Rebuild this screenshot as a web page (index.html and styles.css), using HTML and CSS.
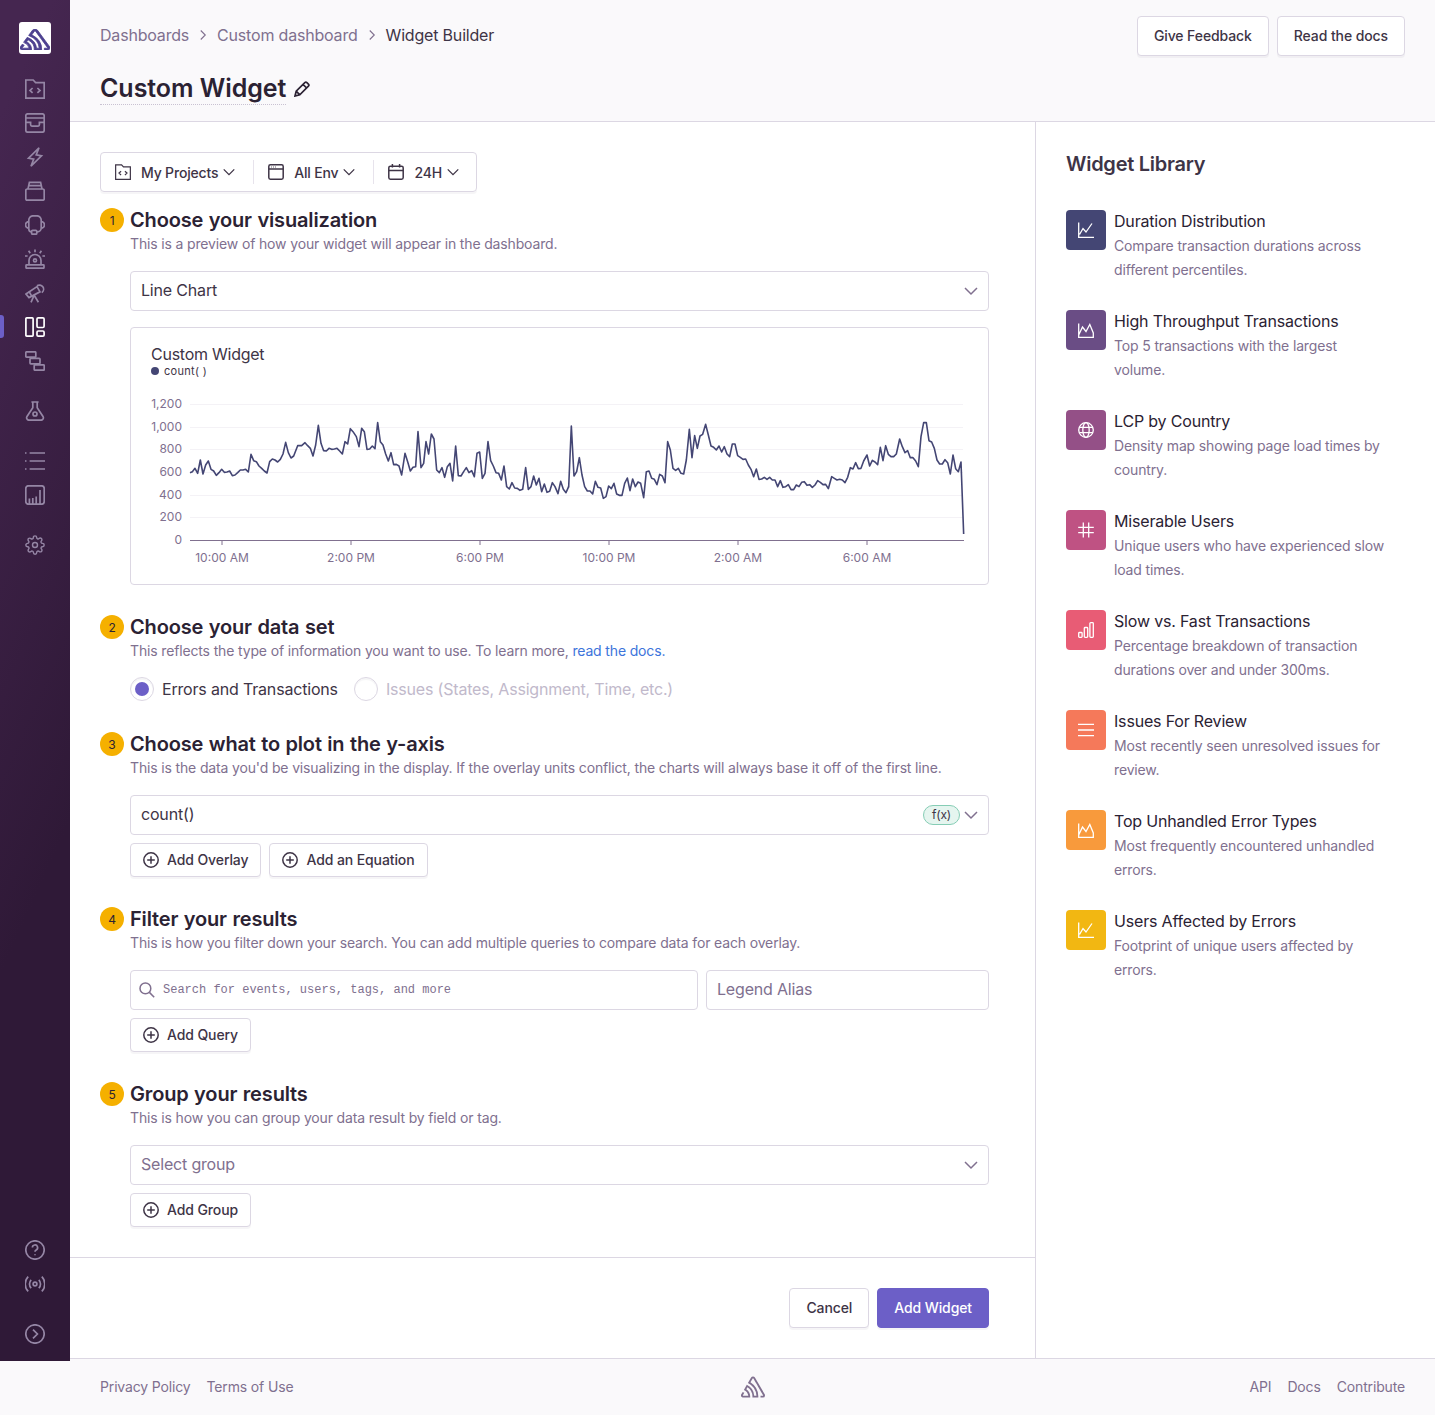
FILE: index.html
```html
<!DOCTYPE html>
<html lang="en">
<head>
<meta charset="UTF-8" />
<meta name="viewport" content="width=device-width, initial-scale=1.0"/>
<title>Widget Builder</title>
<link rel="stylesheet" href="styles.css">
</head>
<body>

<!-- Icon sprite -->
<svg class="sprite" xmlns="http://www.w3.org/2000/svg">
  <symbol id="logo" viewBox="0 0 50 44"><path fill="currentColor" d="M29,2.26a4.67,4.67,0,0,0-8,0L14.42,13.53A32.21,32.21,0,0,1,32.17,40.19H27.55A27.68,27.68,0,0,0,12.09,17.47L6,28a15.92,15.92,0,0,1,9.23,12.17H4.62A.76.76,0,0,1,4,39.06l2.94-5a10.74,10.74,0,0,0-3.36-1.9l-2.91,5a4.54,4.54,0,0,0,1.69,6.24A4.66,4.66,0,0,0,4.62,44H19.15a19.4,19.4,0,0,0-8-17.31l2.31-4A23.87,23.87,0,0,1,23.76,44H36.07a35.88,35.88,0,0,0-16.41-31.8l4.67-8a.77.77,0,0,1,1.05-.27c.53.29,20.29,34.77,20.66,35.17a.76.76,0,0,1-.68,1.13H40.6q.09,1.91,0,3.81h4.78A4.59,4.59,0,0,0,50,39.43a4.49,4.49,0,0,0-.62-2.28Z"/></symbol>
  <symbol id="folder" viewBox="0 0 20 20"><path d="M.8 19.2V1h7.4l2.4 2.6h8.6v15.6zM7.6 9 5 11.4l2.6 2.4M12.4 9l2.6 2.4-2.6 2.4"/></symbol>
  <symbol id="inbox" viewBox="0 0 20 20"><rect x=".8" y=".8" width="18.4" height="18.4" rx="2"/><path d="M.8 5h18.4M.8 9.400h4.800v2.400c0 .8.5 1.300 1.300 1.300h6.200c.8 0 1.300-.5 1.300-1.300V9.400h4.800"/></symbol>
  <symbol id="bolt" viewBox="0 0 20 20"><path d="M14 .8 3.500 11.200l5.200.9-2.700 7.100L16.500 8.800l-5.300-.9z"/></symbol>
  <symbol id="box" viewBox="0 0 20 20"><rect x=".8" y="8" width="18.400" height="11.200" rx="1.400"/><path d="M3 8l1.400-6.600h11.200L17 8M3.800 4.600h12.400"/></symbol>
  <symbol id="headset" viewBox="0 0 20 20"><path d="M3.800 6.600V5a4.200 4.200 0 0 1 4.200-4.200h4A4.200 4.200 0 0 1 16.200 5v8a3.800 3.800 0 0 1-3.800 3.800h-.6M3.800 6.600a3.300 3.300 0 0 0 0 6.600zM16.200 6.600a3.300 3.300 0 0 1 0 6.600M3.800 13.200v.8a2.800 2.800 0 0 0 2.800 2.800"/><rect x="6.600" y="15.400" width="5.200" height="3.800" rx="1"/></symbol>
  <symbol id="siren" viewBox="0 0 20 20"><rect x="1" y="15.800" width="18" height="3.400" rx=".6"/><path d="M4 15.800V11.500a6 6 0 0 1 12 0v4.300M10 .6v2.600M3.600 1.800l1.600 2.400M16.400 1.800l-1.600 2.400M0 7h2.600M20 7h-2.600"/><circle cx="10" cy="11.400" r="1.500"/></symbol>
  <symbol id="telescope" viewBox="0 0 20 20"><path d="M1 11 12 3.600l3 5.200L4 14.600zM12 2.800a3.600 3.600 0 1 1 4.800 6.800M9.200 12.200 6 19.400M9.200 12.200l4.200 7"/><path d="M4 8.400l2.800 5"/></symbol>
  <symbol id="dash" viewBox="0 0 20 20"><rect x=".9" y=".9" width="7.200" height="18.200" rx=".8"/><rect x="12" y=".9" width="7.100" height="9.600" rx="1.200"/><rect x="12" y="14" width="7.100" height="5.100" rx="1.200"/></symbol>
  <symbol id="stack" viewBox="0 0 20 20"><rect x=".8" y=".8" width="10" height="5.400" rx=".8"/><rect x="5" y="7.400" width="10" height="5.400" rx=".8"/><rect x="9.200" y="13.800" width="10" height="5.400" rx=".8"/></symbol>
  <symbol id="flask" viewBox="0 0 20 20"><path d="M6.400 1h7.200M7.800 1v5.800L2 15.400c-1 1.700.1 3.800 2 3.800h12c1.900 0 3-2.100 2-3.800l-5.800-8.600V1"/><circle cx="10" cy="13" r="2"/></symbol>
  <symbol id="list" viewBox="0 0 20 20"><path d="M4.600 2h15.400M4.600 10h15.400M4.600 18h15.400M0 2h1.500M0 10h1.500M0 18h1.500"/></symbol>
  <symbol id="stats" viewBox="0 0 20 20"><rect x=".8" y=".8" width="18.400" height="18.400" rx="2.600"/><path d="M4.400 19v-5.400M7.800 19v-6M11.200 19v-7.600M15 19V5"/></symbol>
  <symbol id="gear" viewBox="0 0 24 24"><circle cx="12" cy="12" r="3"/><path d="M19.400 15a1.650 1.650 0 0 0 .33 1.820l.06.06a2 2 0 0 1 0 2.830 2 2 0 0 1-2.830 0l-.06-.06a1.650 1.650 0 0 0-1.820-.33 1.650 1.650 0 0 0-1 1.510V21a2 2 0 0 1-2 2 2 2 0 0 1-2-2v-.09A1.650 1.650 0 0 0 9 19.400a1.650 1.650 0 0 0-1.820.33l-.06.06a2 2 0 0 1-2.830 0 2 2 0 0 1 0-2.830l.06-.06a1.650 1.650 0 0 0 .33-1.820 1.650 1.650 0 0 0-1.510-1H3a2 2 0 0 1-2-2 2 2 0 0 1 2-2h.09A1.650 1.650 0 0 0 4.600 9a1.650 1.650 0 0 0-.33-1.820l-.06-.06a2 2 0 0 1 0-2.830 2 2 0 0 1 2.830 0l.06.06a1.650 1.650 0 0 0 1.820.33H9a1.650 1.650 0 0 0 1-1.510V3a2 2 0 0 1 2-2 2 2 0 0 1 2 2v.09a1.650 1.650 0 0 0 1 1.510 1.650 1.650 0 0 0 1.820-.33l.06-.06a2 2 0 0 1 2.830 0 2 2 0 0 1 0 2.830l-.06.06a1.650 1.650 0 0 0-.33 1.820V9a1.650 1.650 0 0 0 1.510 1H21a2 2 0 0 1 2 2 2 2 0 0 1-2 2h-.09a1.650 1.650 0 0 0-1.510 1z"/></symbol>
  <symbol id="help" viewBox="0 0 20 20"><circle cx="10" cy="10" r="9.200"/><path d="M7.400 7.600a2.600 2.600 0 1 1 3.800 2.300c-.8.4-1.200.9-1.200 1.800M10 14.200v1"/></symbol>
  <symbol id="broadcast" viewBox="0 0 20 20"><circle cx="10" cy="10" r="1.900"/><path d="M6.200 5.800a6 6 0 0 0 0 8.400M13.800 5.800a6 6 0 0 1 0 8.400M3.200 2.600a10.600 10.600 0 0 0 0 14.800M16.800 2.600a10.600 10.600 0 0 1 0 14.800"/></symbol>
  <symbol id="circle-right" viewBox="0 0 20 20"><circle cx="10" cy="10" r="9.200"/><path d="M8 5.600l4.400 4.400L8 14.400"/></symbol>
  <symbol id="right" viewBox="0 0 16 16"><path d="M5 2l6 6-6 6"/></symbol>
  <symbol id="down" viewBox="0 0 16 16"><path d="M2 5l6 6 6-6"/></symbol>
  <symbol id="pencil" viewBox="0 0 16 16"><path d="M1 15l1.200-4.800L10.800 1.600a1.500 1.500 0 0 1 2.100 0l1.500 1.500a1.500 1.500 0 0 1 0 2.100L5.800 13.800zM2.200 10.200l3.600 3.600M9 3.400l3.600 3.600"/></symbol>
  <symbol id="window" viewBox="0 0 16 16"><rect x=".8" y=".8" width="14.400" height="14.400" rx="1.600"/><path d="M.8 5h14.400M3 3h.5M5 3h.5M7 3h.5"/></symbol>
  <symbol id="calendar" viewBox="0 0 16 16"><rect x=".8" y="2.200" width="14.400" height="13" rx="1.600"/><path d="M.8 6.400h14.400M4.400 0v3.600M11.600 0v3.600"/></symbol>
  <symbol id="plus" viewBox="0 0 16 16"><circle cx="8" cy="8" r="7.200"/><path d="M8 4.200v7.600M4.200 8h7.600"/></symbol>
  <symbol id="search" viewBox="0 0 16 16"><circle cx="6.400" cy="6.400" r="5.400"/><path d="M10.400 10.400 15.200 15.200"/></symbol>
  <symbol id="w-line" viewBox="0 0 16 16"><path d="M.7 .5V15.300H16M1.500 12.500 5 6.500l3 3.500 6-8.500"/></symbol>
  <symbol id="w-area" viewBox="0 0 16 16"><path d="M.7 1.500V15.300H15.300V11L11.800 2.500 8 9.500 4.500 5 .7 13"/></symbol>
  <symbol id="w-globe" viewBox="0 0 16 16"><circle cx="8" cy="8" r="7.300"/><ellipse cx="8" cy="8" rx="3.200" ry="7.300"/><path d="M1.200 5.400h13.600M1.200 10.600h13.600"/></symbol>
  <symbol id="w-hash" viewBox="0 0 16 16"><path d="M5.300 .5v15M10.700 .5v15M.2 5.300h15.600M.2 10.700h15.600"/></symbol>
  <symbol id="w-bars" viewBox="0 0 16 16"><rect x=".7" y="10.500" width="3.400" height="4.800" rx=".8"/><rect x="6.300" y="5.500" width="3.400" height="9.800" rx=".8"/><rect x="11.900" y=".7" width="3.400" height="14.600" rx=".8"/></symbol>
  <symbol id="w-lines" viewBox="0 0 16 16"><path d="M0 2.300h16M0 8h16M0 13.700h16"/></symbol>
</svg>

<div class="app">
  <nav class="sidebar">
    <div class="logo-tile"><svg class="logo-mark" viewBox="0 0 50 44" preserveAspectRatio="none"><use href="#logo" width="50" height="44"/></svg></div>
    <div class="nav-group">
      <a class="nav-item"><svg class="ico"><use href="#folder"/></svg></a>
      <a class="nav-item"><svg class="ico"><use href="#inbox"/></svg></a>
      <a class="nav-item"><svg class="ico"><use href="#bolt"/></svg></a>
      <a class="nav-item"><svg class="ico"><use href="#box"/></svg></a>
      <a class="nav-item"><svg class="ico"><use href="#headset"/></svg></a>
      <a class="nav-item"><svg class="ico"><use href="#siren"/></svg></a>
      <a class="nav-item"><svg class="ico"><use href="#telescope"/></svg></a>
      <a class="nav-item active"><svg class="ico"><use href="#dash"/></svg></a>
      <a class="nav-item"><svg class="ico"><use href="#stack"/></svg></a>
    </div>
    <div class="nav-group">
      <a class="nav-item"><svg class="ico"><use href="#flask"/></svg></a>
    </div>
    <div class="nav-group">
      <a class="nav-item"><svg class="ico"><use href="#list"/></svg></a>
      <a class="nav-item"><svg class="ico"><use href="#stats"/></svg></a>
    </div>
    <div class="nav-group">
      <a class="nav-item"><svg class="ico"><use href="#gear"/></svg></a>
    </div>
    <div class="nav-group nav-bottom">
      <a class="nav-item"><svg class="ico"><use href="#help"/></svg></a>
      <a class="nav-item"><svg class="ico"><use href="#broadcast"/></svg></a>
    </div>
    <div class="nav-group">
      <a class="nav-item"><svg class="ico"><use href="#circle-right"/></svg></a>
    </div>
  </nav>

  <div class="main">
    <header class="page-head">
      <div class="head-top">
        <div class="crumbs">
          <a>Dashboards</a>
          <svg class="crumb-sep"><use href="#right"/></svg>
          <a>Custom dashboard</a>
          <svg class="crumb-sep"><use href="#right"/></svg>
          <span class="crumb-here">Widget Builder</span>
        </div>
        <div class="head-actions">
          <button class="btn btn-lg">Give Feedback</button>
          <button class="btn btn-lg">Read the docs</button>
        </div>
      </div>
      <div class="title-row">
        <h1>Custom Widget</h1>
        <svg class="title-edit"><use href="#pencil"/></svg>
      </div>
    </header>

    <div class="columns">
      <div class="builder">
        <div class="builder-body">
          <div class="filter-bar">
            <div class="filter-item"><svg class="ico-16"><use href="#folder"/></svg><span>My Projects</span><svg class="chev"><use href="#down"/></svg></div>
            <div class="filter-item"><svg class="ico-16"><use href="#window"/></svg><span>All Env</span><svg class="chev"><use href="#down"/></svg></div>
            <div class="filter-item"><svg class="ico-16"><use href="#calendar"/></svg><span>24H</span><svg class="chev"><use href="#down"/></svg></div>
          </div>

          <!-- Step 1 -->
          <section class="step">
            <div class="step-head"><span class="step-num">1</span><h2>Choose your visualization</h2></div>
            <p class="step-desc">This is a preview of how your widget will appear in the dashboard.</p>
            <div class="step-body">
              <div class="field"><span>Line Chart</span><svg class="chev-field"><use href="#down"/></svg></div>
              <div class="chart-card">
                <div class="chart-title">Custom Widget</div>
                <div class="chart-legend"><i></i>count( )</div>
                <svg class="chart" viewBox="131 385 857 196">
                  <g class="grid">
                    <path d="M190 404.500H963M190 427.500H963M190 449.500H963M190 472.500H963M190 495.500H963M190 517.500H963"/>
                  </g>
                  <path class="axis" d="M190 540.500H964M222 540v5M351 540v5M480 540v5M609 540v5M738 540v5M867 540v5"/>
                  <g class="y-labels">
                    <text x="182" y="408">1,200</text>
                    <text x="182" y="431">1,000</text>
                    <text x="182" y="453">800</text>
                    <text x="182" y="476">600</text>
                    <text x="182" y="499">400</text>
                    <text x="182" y="521">200</text>
                    <text x="182" y="544">0</text>
                  </g>
                  <g class="x-labels">
                    <text x="222" y="562">10:00 AM</text>
                    <text x="351" y="562">2:00 PM</text>
                    <text x="480" y="562">6:00 PM</text>
                    <text x="609" y="562">10:00 PM</text>
                    <text x="738" y="562">2:00 AM</text>
                    <text x="867" y="562">6:00 AM</text>
                  </g>
                  <g transform="translate(130 330) scale(.33333)">
                    <polyline class="series" points="180,428 187,425 195,415 203,430 211,390 219,432 227,405 235,393 243,418 251,423 259,436 267,428 275,418 283,427 291,426 299,423 307,437 315,435 323,428 331,420 339,420 347,418 355,426 363,373 371,392 379,395 387,408 395,415 403,423 411,429 419,395 427,387 435,390 443,396 451,388 459,372 467,337 475,368 483,384 491,378 503,347 515,347 525,338 533,347 541,355 549,378 557,345 565,286 573,340 581,362 589,363 597,355 605,358 613,357 621,355 629,363 637,372 645,335 653,342 661,296 669,305 679,320 687,350 695,295 703,305 711,358 719,357 727,348 735,356 743,278 751,335 759,345 767,372 775,393 783,368 791,404 799,403 807,408 815,435 825,370 833,395 841,423 849,412 857,410 864,305 873,413 881,400 888,335 896,372 904,312 912,327 920,420 928,428 936,413 944,442 952,410 960,400 968,453 977,348 985,437 993,438 1001,425 1009,413 1017,428 1025,422 1033,440 1041,370 1049,366 1057,445 1065,430 1074,335 1082,392 1090,408 1098,428 1106,430 1114,450 1122,408 1130,470 1138,477 1146,458 1154,474 1162,475 1170,481 1178,478 1187,413 1195,478 1203,470 1211,438 1219,465 1227,445 1235,485 1243,462 1251,487 1259,484 1267,458 1275,470 1284,491 1292,454 1300,478 1308,488 1316,470"/>
                  </g>
                  <g transform="translate(560 390) scale(.33333)">
                    <polyline class="series" points="26,292 34,108 42,258 50,245 58,203 66,255 74,290 82,303 90,303 98,312 106,274 114,292 122,294 130,325 138,320 146,288 154,296 162,280 170,312 178,316 186,316 194,280 202,264 210,302 218,267 226,290 234,276 242,280 251,323 259,245 267,243 275,265 283,268 291,284 299,253 307,258 315,278 323,155 331,180 339,235 347,241 355,235 363,250 371,252 379,210 388,118 396,203 404,137 412,175 420,138 428,133 437,103 445,135 453,168 461,172 469,180 477,168 485,186 493,170 501,192 509,200 517,162 525,162 533,197 541,202 549,208 557,207 565,225 573,238 581,260 589,237 597,268 605,267 613,262 621,268 629,262 637,270 645,270 653,290 661,272 669,292 677,290 685,284 693,299 701,299 709,285 717,290 725,277 733,275 741,286 749,284 757,292 765,285 773,272 781,277 789,284 797,283 805,296 815,260 823,265 831,270 839,268 847,270 855,278 863,262 871,233 879,237 887,218 895,236 903,235 911,213 921,195 929,228 937,211 945,216 953,224 961,172 969,212 977,167 985,193 993,200 1001,200 1009,192 1019,147 1027,170 1035,188 1043,182 1051,203 1059,203 1067,213 1075,230 1083,140 1091,98 1099,98 1107,152 1115,156 1123,175 1131,210 1139,222 1147,222 1155,209 1163,218 1171,252 1179,195 1187,236 1195,245 1203,216 1211,432"/>
                  </g>
                </svg>
              </div>
            </div>
          </section>

          <!-- Step 2 -->
          <section class="step">
            <div class="step-head"><span class="step-num">2</span><h2>Choose your data set</h2></div>
            <p class="step-desc">This reflects the type of information you want to use. To learn more, <a class="doc-link">read the docs.</a></p>
            <div class="step-body radios">
              <label class="radio"><i class="radio-dot checked"></i>Errors and Transactions</label>
              <label class="radio disabled"><i class="radio-dot"></i>Issues (States, Assignment, Time, etc.)</label>
            </div>
          </section>

          <!-- Step 3 -->
          <section class="step">
            <div class="step-head"><span class="step-num">3</span><h2>Choose what to plot in the y-axis</h2></div>
            <p class="step-desc">This is the data you'd be visualizing in the display. If the overlay units conflict, the charts will always base it off of the first line.</p>
            <div class="step-body">
              <div class="field"><span>count()</span><span class="fx">f(x)</span><svg class="chev-field near"><use href="#down"/></svg></div>
              <div class="btn-row">
                <button class="btn btn-sm"><svg class="ico-16"><use href="#plus"/></svg>Add Overlay</button>
                <button class="btn btn-sm"><svg class="ico-16"><use href="#plus"/></svg>Add an Equation</button>
              </div>
            </div>
          </section>

          <!-- Step 4 -->
          <section class="step">
            <div class="step-head"><span class="step-num">4</span><h2>Filter your results</h2></div>
            <p class="step-desc">This is how you filter down your search. You can add multiple queries to compare data for each overlay.</p>
            <div class="step-body">
              <div class="query-row">
                <div class="field search"><svg class="search-ico"><use href="#search"/></svg><span>Search for events, users, tags, and more</span></div>
                <div class="field alias"><span>Legend Alias</span></div>
              </div>
              <div class="btn-row">
                <button class="btn btn-sm"><svg class="ico-16"><use href="#plus"/></svg>Add Query</button>
              </div>
            </div>
          </section>

          <!-- Step 5 -->
          <section class="step">
            <div class="step-head"><span class="step-num">5</span><h2>Group your results</h2></div>
            <p class="step-desc">This is how you can group your data result by field or tag.</p>
            <div class="step-body">
              <div class="field placeholder"><span>Select group</span><svg class="chev-field"><use href="#down"/></svg></div>
              <div class="btn-row">
                <button class="btn btn-sm"><svg class="ico-16"><use href="#plus"/></svg>Add Group</button>
              </div>
            </div>
          </section>
        </div>

        <div class="builder-foot">
          <button class="btn btn-lg">Cancel</button>
          <button class="btn btn-lg btn-primary">Add Widget</button>
        </div>
      </div>

      <aside class="library">
        <h3>Widget Library</h3>
        <div class="lib-list">
          <div class="lib-item">
            <span class="lib-icon c1"><svg><use href="#w-line"/></svg></span>
            <div><h4>Duration Distribution</h4><p>Compare transaction durations across different percentiles.</p></div>
          </div>
          <div class="lib-item">
            <span class="lib-icon c2"><svg><use href="#w-area"/></svg></span>
            <div><h4>High Throughput Transactions</h4><p>Top 5 transactions with the largest volume.</p></div>
          </div>
          <div class="lib-item">
            <span class="lib-icon c3"><svg><use href="#w-globe"/></svg></span>
            <div><h4>LCP by Country</h4><p>Density map showing page load times by country.</p></div>
          </div>
          <div class="lib-item">
            <span class="lib-icon c4"><svg><use href="#w-hash"/></svg></span>
            <div><h4>Miserable Users</h4><p>Unique users who have experienced slow load times.</p></div>
          </div>
          <div class="lib-item">
            <span class="lib-icon c5"><svg><use href="#w-bars"/></svg></span>
            <div><h4>Slow vs. Fast Transactions</h4><p>Percentage breakdown of transaction durations over and under 300ms.</p></div>
          </div>
          <div class="lib-item">
            <span class="lib-icon c6"><svg><use href="#w-lines"/></svg></span>
            <div><h4>Issues For Review</h4><p>Most recently seen unresolved issues for review.</p></div>
          </div>
          <div class="lib-item">
            <span class="lib-icon c7"><svg><use href="#w-area"/></svg></span>
            <div><h4>Top Unhandled Error Types</h4><p>Most frequently encountered unhandled errors.</p></div>
          </div>
          <div class="lib-item">
            <span class="lib-icon c8"><svg><use href="#w-line"/></svg></span>
            <div><h4>Users Affected by Errors</h4><p>Footprint of unique users affected by errors.</p></div>
          </div>
        </div>
      </aside>
    </div>

    <footer class="page-foot">
      <div class="foot-links"><a>Privacy Policy</a><a>Terms of Use</a></div>
      <svg class="foot-logo"><use href="#logo"/></svg>
      <div class="foot-links foot-right"><a>API</a><a>Docs</a><a>Contribute</a></div>
    </footer>
  </div>
</div>

</body>
</html>
```

FILE: styles.css
```css
:root {
  --text: #2b2233;
  --body: #3e3446;
  --muted: #80708f;
  --border: #dcd7e3;
  --primary: #6c5fc7;
}
* {
  box-sizing: border-box;
}
body {
  margin: 0;
  background: #faf9fb;
  color: var(--body);
  font-family: Inter, "Noto Sans", sans-serif;
  font-size: 14px;
  letter-spacing: -0.15px;
}
h1, h2, h3, h4, p {
  margin: 0;
}
svg {
  fill: none;
  stroke: currentColor;
  stroke-width: 1.5;
  flex: none;
}
.sprite {
  display: none;
}
.app {
  display: flex;
  align-items: flex-start;
}

/* Sidebar */
.sidebar {
  width: 70px;
  height: 1361px;
  flex: none;
  display: flex;
  flex-direction: column;
  gap: 16px;
  padding: 22px 0 10px;
  background: linear-gradient(294.17deg, #2f1937 35.57%, #452650 92.42%);
  color: #9586a5;
}
.logo-tile {
  width: 32px;
  height: 32px;
  margin: 0 0 2px 19px;
  background: white;
  border-radius: 3px;
  display: flex;
  align-items: center;
  justify-content: center;
  color: #4d4190;
}
.logo-mark {
  width: 30px;
  height: 21px;
  margin-top: 2px;
  stroke-width: 1.5;
}
.nav-group {
  display: flex;
  flex-direction: column;
}
.nav-bottom {
  margin-top: auto;
}
.nav-item {
  position: relative;
  height: 34px;
  display: flex;
  align-items: center;
  justify-content: center;
}
.ico {
  width: 20px;
  height: 20px;
  stroke-width: 1.7;
}
.nav-item.active {
  color: white;
}
.nav-item.active::before {
  content: "";
  position: absolute;
  left: 0;
  top: 5px;
  width: 4px;
  height: 23px;
  background: var(--primary);
  border-radius: 0 3px 3px 0;
}

/* Page header */
.main {
  flex: 1;
  min-width: 0;
}
.page-head {
  padding: 16px 30px 16px;
  border-bottom: 1px solid var(--border);
}
.head-top {
  display: flex;
  align-items: center;
  justify-content: space-between;
  height: 40px;
}
.crumbs {
  display: flex;
  align-items: center;
  gap: 8px;
  font-size: 16px;
  color: var(--muted);
  margin-top: -2px;
  letter-spacing: -0.19px;
}
.crumb-sep {
  width: 12px;
  height: 12px;
}
.crumb-here {
  color: var(--body);
}
.head-actions {
  display: flex;
  gap: 8px;
}
.title-row {
  display: flex;
  align-items: center;
  gap: 8px;
  margin-top: 16px;
  height: 33px;
}
.title-row h1 {
  font-size: 25px;
  line-height: 32px;
  font-weight: 600;
  letter-spacing: -0.05px;
  color: var(--text);
  border-bottom: 1px dotted #c9c2d2;
}
.title-edit {
  width: 16px;
  height: 16px;
  color: var(--text);
  stroke-width: 1.7;
}

/* Buttons */
.btn {
  display: inline-flex;
  align-items: center;
  font-family: inherit;
  font-size: 14px;
  font-weight: 550;
  letter-spacing: -0.1px;
  color: var(--body);
  background: white;
  border: 1px solid var(--border);
  border-radius: 4px;
  box-shadow: 0 2px 0 rgba(37, 11, 54, 0.04);
}
.btn-lg {
  height: 40px;
  padding: 0 16px 2px;
}
.btn-sm {
  height: 34px;
  padding: 0 12px 2px;
  gap: 8px;
}
.btn-sm svg {
  margin-top: 2px;
}
.btn-primary {
  background: var(--primary);
  border-color: var(--primary);
  color: white;
}
.btn-row {
  display: flex;
  gap: 8px;
}

/* Builder column */
.columns {
  display: grid;
  grid-template-columns: 1fr 399px;
}
.builder {
  border-right: 1px solid var(--border);
  background: white;
}
.library {
  background: white;
  padding: 30px;
}
.builder-body {
  padding: 30px 46px 30px 30px;
  display: flex;
  flex-direction: column;
  gap: 30px;
}
.filter-bar {
  display: inline-flex;
  align-self: flex-start;
  height: 40px;
  margin-bottom: -14px;
  padding: 7px 0;
  border: 1px solid var(--border);
  border-radius: 4px;
  box-shadow: 0 2px 0 rgba(37, 11, 54, 0.04);
}
.filter-item {
  display: flex;
  align-items: center;
  padding: 0 17px 0 14px;
  font-weight: 550;
  letter-spacing: -0.18px;
  color: var(--body);
  border-left: 1px solid #e7e3ec;
}
.filter-item:first-child {
  border-left: none;
}
.filter-item:last-child {
  padding-right: 16px;
}
.ico-16 {
  width: 16px;
  height: 16px;
}
.filter-item span {
  margin: 0 4px 0 10px;
}
.chev {
  width: 14px;
  height: 14px;
}
.step-head {
  display: flex;
  align-items: center;
  gap: 6px;
  height: 24px;
}
.step-num {
  width: 24px;
  height: 24px;
  border-radius: 50%;
  background: #f5b000;
  color: var(--text);
  font-size: 12px;
  display: flex;
  align-items: center;
  justify-content: center;
}
.step-head h2 {
  font-size: 20px;
  line-height: 24px;
  font-weight: 600;
  letter-spacing: -0.15px;
  word-spacing: 0.6px;
  color: var(--text);
}
.step-desc {
  margin: 4px 0 0 30px;
  line-height: 16px;
  color: var(--muted);
}
.doc-link {
  color: #3d74db;
}
.step-body {
  margin: 19px 0 0 30px;
  display: flex;
  flex-direction: column;
  gap: 8px;
}
.field {
  position: relative;
  display: flex;
  align-items: center;
  height: 40px;
  padding: 0 10px 2px;
  font-size: 16px;
  letter-spacing: -0.18px;
  color: var(--body);
  background: white;
  border: 1px solid var(--border);
  border-radius: 4px;
}
.field.placeholder, .field.alias {
  color: var(--muted);
}
.chev-field {
  width: 16px;
  height: 16px;
  margin: 2px -1px 0 auto;
  color: var(--muted);
}
.fx {
  margin: 2px 0 0 auto;
  height: 20px;
  width: 37px;
  border-radius: 10px;
  background: #e5f5ef;
  border: 1px solid #86cdb5;
  font-size: 12px;
  line-height: 18px;
  text-align: center;
}
.chev-field.near {
  margin-left: 3px;
}

/* Chart */
.chart-card {
  margin-top: 8px;
  padding: 18px 0 3px;
  border: 1px solid var(--border);
  border-radius: 4px;
}
.chart-title {
  margin-left: 20px;
  font-size: 16px;
  line-height: 16px;
  letter-spacing: -0.25px;
}
.chart-legend {
  margin: 2px 0 0 20px;
  display: flex;
  align-items: center;
  gap: 5px;
  font-size: 11px;
  line-height: 14px;
  letter-spacing: 0.3px;
}
.chart-legend i {
  width: 8px;
  height: 8px;
  border-radius: 50%;
  background: #444674;
}
.chart {
  display: block;
  width: 857px;
  height: 196px;
  margin-top: 7px;
}
.grid path {
  stroke: #f4f2f6;
  stroke-width: 1;
}
.axis {
  stroke: #80708f;
  stroke-width: 1;
}
.chart text {
  fill: #80708f;
  stroke: none;
  font-size: 12px;
  letter-spacing: 0;
}
.y-labels text {
  text-anchor: end;
}
.x-labels text {
  text-anchor: middle;
}
.series {
  stroke: #444674;
  stroke-width: 1.6;
  stroke-linejoin: round;
  vector-effect: non-scaling-stroke;
}

/* Radios */
.radios {
  flex-direction: row;
  gap: 16px;
  height: 25px;
  margin-top: 18px;
}
.radio {
  display: flex;
  align-items: center;
  gap: 8px;
  height: 24px;
  font-size: 16px;
  letter-spacing: -0.18px;
}
.radio.disabled {
  color: #c1b9cb;
}
.radio-dot {
  width: 24px;
  height: 24px;
  border-radius: 50%;
  border: 1px solid var(--border);
  box-shadow: inset 0 2px 1px rgba(37, 11, 54, 0.04);
  display: flex;
  align-items: center;
  justify-content: center;
}
.radio-dot.checked::after {
  content: "";
  width: 14px;
  height: 14px;
  border-radius: 50%;
  background: var(--primary);
}

/* Query row */
.query-row {
  display: grid;
  grid-template-columns: 568px 1fr;
  gap: 8px;
}
.search {
  gap: 8px;
  padding: 0 10px 0 8px;
  font-family: "Liberation Mono", monospace;
  font-size: 12px;
  letter-spacing: 0;
  color: var(--muted);
}
.search-ico {
  width: 16px;
  height: 16px;
}

/* Form footer */
.builder-foot {
  display: flex;
  justify-content: flex-end;
  gap: 8px;
  padding: 30px 46px 30px 0;
  border-top: 1px solid var(--border);
}

/* Widget library */
.library h3 {
  font-size: 20px;
  line-height: 24px;
  font-weight: 600;
  letter-spacing: -0.25px;
  color: var(--body);
  margin-bottom: 34px;
}
.lib-list {
  display: flex;
  flex-direction: column;
  gap: 28px;
}
.lib-item {
  display: flex;
  gap: 8px;
}
.lib-icon {
  width: 40px;
  height: 40px;
  border-radius: 4px;
  flex: none;
  display: flex;
  align-items: center;
  justify-content: center;
  color: white;
}
.lib-icon svg {
  width: 16px;
  height: 16px;
  stroke-width: 1.3;
}
.c1 { background: #444674; }
.c2 { background: #6a4d85; }
.c3 { background: #945087; }
.c4 { background: #bf5283; }
.c5 { background: #e85c75; }
.c6 { background: #f5795a; }
.c7 { background: #f89a3c; }
.c8 { background: #f2b712; }
.lib-item h4 {
  margin-top: 1px;
  font-size: 16px;
  line-height: 20px;
  font-weight: 400;
  letter-spacing: -0.18px;
  color: var(--text);
}
.lib-item p {
  margin-top: 3px;
  padding-right: 15px;
  line-height: 24px;
  color: var(--muted);
}

/* Page footer */
.page-foot {
  display: grid;
  grid-template-columns: 1fr auto 1fr;
  align-items: center;
  height: 57px;
  padding: 0 30px;
  border-top: 1px solid var(--border);
  color: var(--muted);
}
.foot-links {
  display: flex;
  gap: 16px;
  margin-top: -2px;
}
.foot-right {
  justify-content: flex-end;
}
.foot-logo {
  width: 24px;
  height: 22px;
  stroke: none;
}
```
